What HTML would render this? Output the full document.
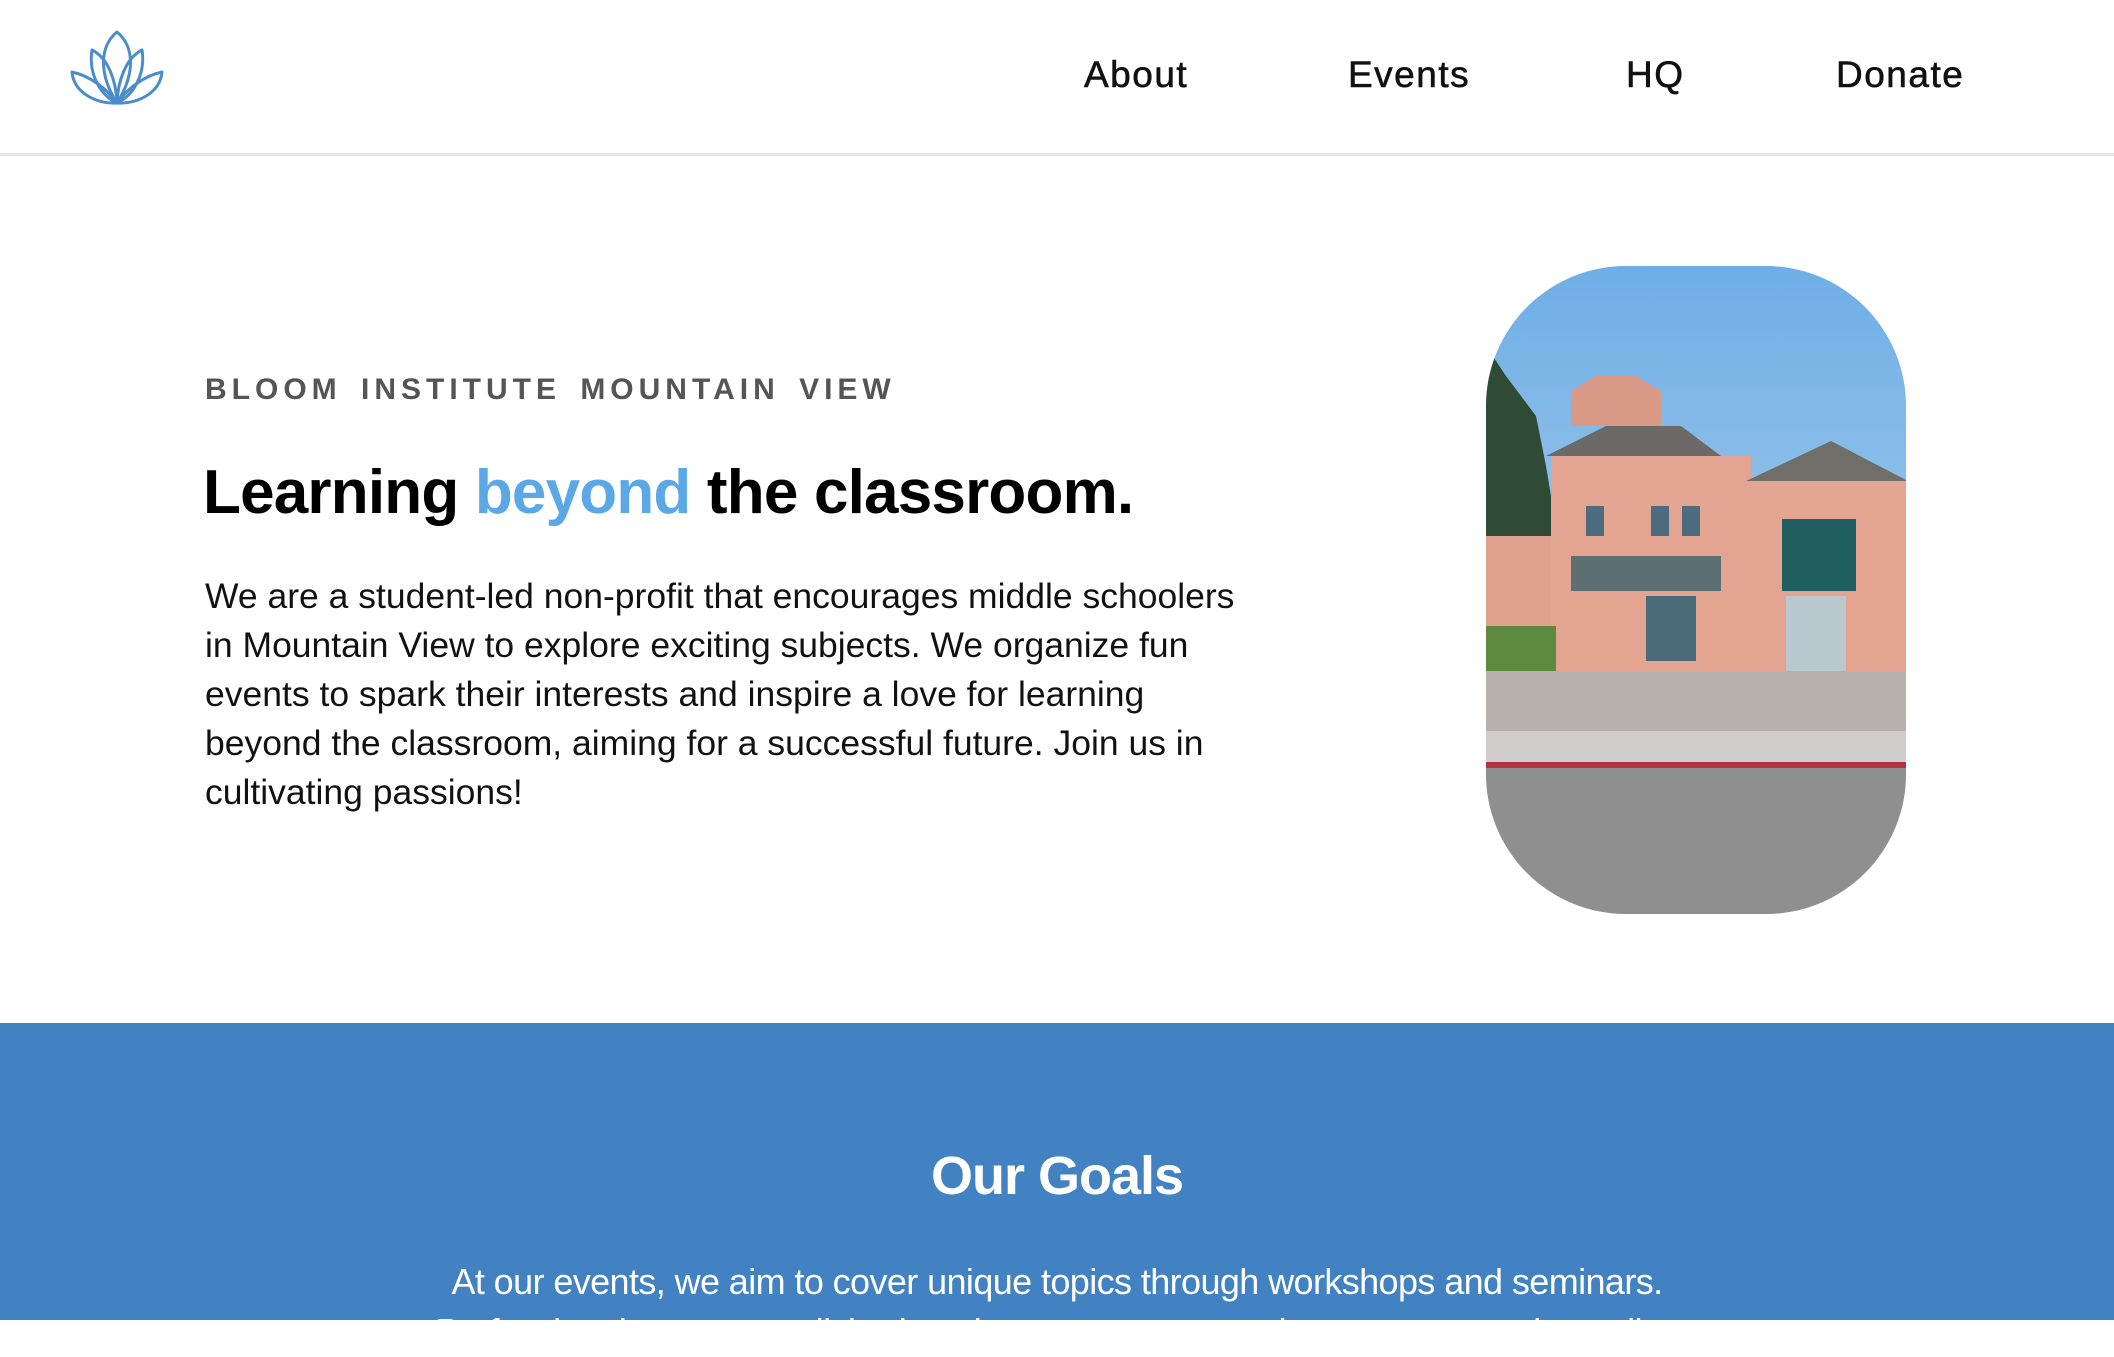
<!DOCTYPE html>
<html><head><meta charset="utf-8"><style>
*{margin:0;padding:0;box-sizing:border-box}
body{width:2114px;height:1320px;overflow:hidden;background:#fff;font-family:"Liberation Sans",sans-serif;color:#000;position:relative}
.nav{position:absolute;left:0;top:0;width:2114px;height:156px;border-bottom:3px solid #e6e6e6}
.nav a{position:absolute;top:50px;font-size:37px;letter-spacing:1.5px;color:#111;text-decoration:none;line-height:50px;-webkit-text-stroke:0.6px #111}
.eyebrow{position:absolute;left:205px;top:370px;font-size:30px;font-weight:bold;letter-spacing:5px;color:#555;word-spacing:6px;line-height:40px;white-space:nowrap}
h1{position:absolute;left:203px;top:455px;font-size:62px;font-weight:900;letter-spacing:-0.8px;line-height:76px;white-space:nowrap}
h1 span{color:#5aa8e6}
p.lead{position:absolute;left:205px;top:572px;width:1045px;font-size:35.5px;line-height:49px;color:#111;letter-spacing:0}
.img{position:absolute;left:1486px;top:266px;width:420px;height:648px;border-radius:140px;overflow:hidden}
.blue{position:absolute;left:0;top:1023px;width:2114px;height:297px;background:#4282c2}
.blue h2{position:absolute;left:0;width:100%;text-align:center;color:#fff;font-size:54px;font-weight:900;letter-spacing:-1px}
.blue p{position:absolute;left:0;width:100%;text-align:center;color:#fff;font-size:36px;letter-spacing:-0.6px;line-height:50px}
</style></head><body>
<div class="nav">
<svg style="position:absolute;left:66px;top:28px" width="102" height="80" viewBox="0 0 102 80" fill="none" stroke="#4a8ccc" stroke-width="3" stroke-linejoin="round">
<path d="M51 4 C34 18 32 45 51 75 C70 45 68 18 51 4Z"/>
<path d="M26 22 C22 48 36 68 51 75 C50 52 42 30 26 22Z"/>
<path d="M76 22 C80 48 66 68 51 75 C52 52 60 30 76 22Z"/>
<path d="M6 44 C8 66 32 76 51 75 C40 60 24 48 6 44Z"/>
<path d="M96 44 C94 66 70 76 51 75 C62 60 78 48 96 44Z"/>
</svg>
<a style="left:1084px">About</a>
<a style="left:1348px">Events</a>
<a style="left:1626px">HQ</a>
<a style="left:1836px">Donate</a>
</div>
<div class="eyebrow">BLOOM INSTITUTE MOUNTAIN VIEW</div>
<h1>Learning <span>beyond</span> the classroom.</h1>
<p class="lead">We are a student-led non-profit that encourages middle schoolers in Mountain View to explore exciting subjects. We organize fun events to spark their interests and inspire a love for learning beyond the classroom, aiming for a successful future. Join us in cultivating passions!</p>
<div class="img"><svg width="420" height="648" viewBox="0 0 420 648">
<defs><linearGradient id="sky" x1="0" y1="0" x2="0" y2="1"><stop offset="0" stop-color="#6eaee6"/><stop offset="1" stop-color="#c4dcf0"/></linearGradient></defs>
<rect width="420" height="648" fill="url(#sky)"/>
<path d="M0 80 L20 110 L50 150 L60 200 L70 260 L60 300 L0 300Z" fill="#2f4a35"/>
<rect x="0" y="270" width="70" height="140" fill="#e0a28e"/>
<polygon points="85,125 110,110 150,110 175,125 175,160 85,160" fill="#d99a87"/>
<polygon points="60,190 120,160 195,160 235,190" fill="#6b6a66"/>
<rect x="65" y="190" width="200" height="215" fill="#e3a591"/>
<rect x="100" y="240" width="18" height="30" fill="#4d6c80"/><rect x="165" y="240" width="18" height="30" fill="#4d6c80"/><rect x="196" y="240" width="18" height="30" fill="#4d6c80"/>
<rect x="85" y="290" width="150" height="35" fill="#5c6f73"/>
<rect x="160" y="330" width="50" height="65" fill="#496a78"/>
<polygon points="260,215 345,175 422,215" fill="#6f6e69"/>
<rect x="265" y="215" width="160" height="195" fill="#e3a591"/>
<rect x="296" y="253" width="74" height="72" fill="#1f5f5f"/>
<rect x="300" y="330" width="60" height="80" fill="#b9c8cf"/>
<rect x="0" y="360" width="70" height="50" fill="#5d8a3e"/>
<rect x="0" y="405" width="420" height="60" fill="#b7b2ae"/>
<rect x="0" y="465" width="420" height="32" fill="#cfcccb"/>
<rect x="0" y="496" width="420" height="6" fill="#b23240"/>
<rect x="0" y="502" width="420" height="146" fill="#8f8f90"/>
</svg></div>
<div class="blue">
<h2 style="top:122px">Our Goals</h2>
<p style="top:234px">At our events, we aim to cover unique topics through workshops and seminars.</p>
<p style="top:284px">Professionals or accomplished students present engaging, age-appropriate talks.</p>
</div>
</body></html>
